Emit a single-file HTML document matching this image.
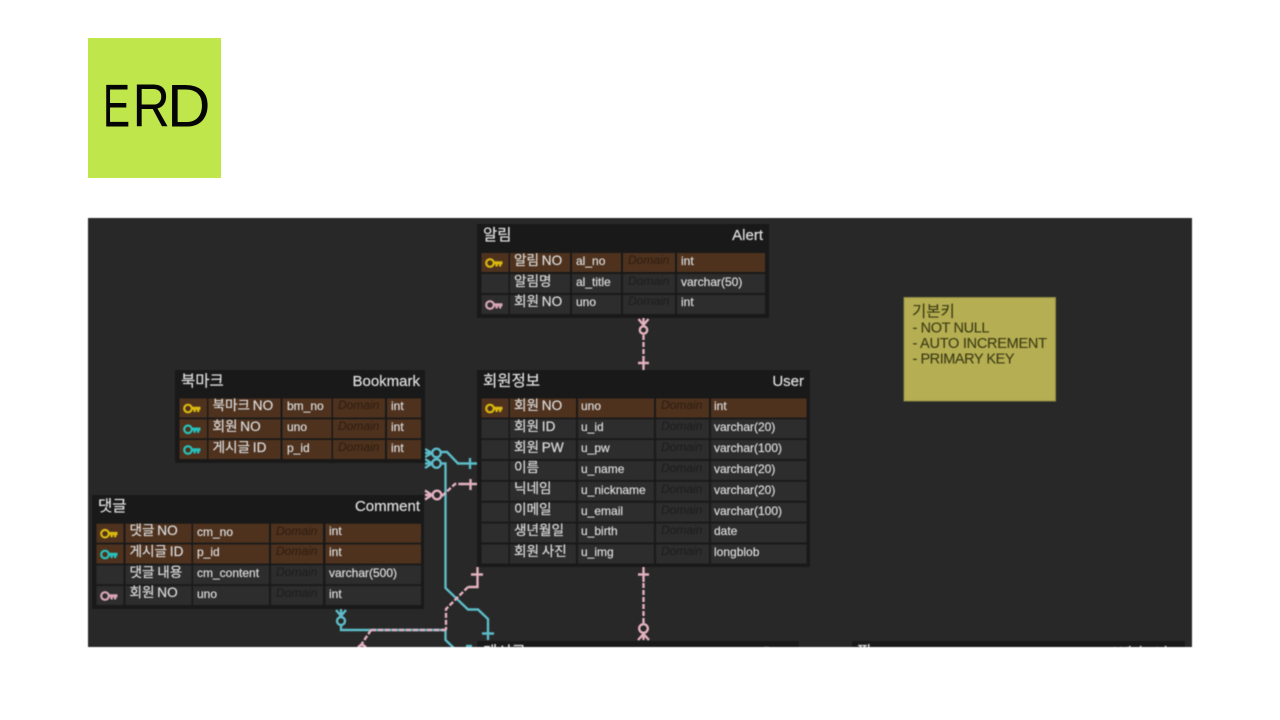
<!DOCTYPE html>
<html lang="ko">
<head>
<meta charset="utf-8">
<title>ERD</title>
<style>
html,body{margin:0;padding:0;background:#fff;width:1280px;height:720px;overflow:hidden}
svg{position:absolute;left:0;top:0}
#d{filter:blur(.5px)}
text{font-family:"Liberation Sans","Noto Sans CJK KR",sans-serif;fill:#dadada;stroke:#dadada;stroke-width:.22px;font-size:12px}
.h{font-size:15.500px;fill:#dedede}
.r{text-anchor:end;font-size:15px;fill:#dedede}
.n{font-size:13.600px;word-spacing:-1px}
.m{font-style:italic;fill:#1c1c1c;stroke:none;font-size:12px}
.mb{font-style:italic;fill:#2e1c0f;stroke:none;font-size:12px}
.a{fill:#4e321e}
.b{fill:#2d2d2d}
.o{fill:#191919}
.t{fill:none;stroke:#5cbcc8;stroke-width:2.400}
.p{fill:none;stroke:#e3b1bf;stroke-width:2.400}
.pd{fill:none;stroke:#e3b1bf;stroke-width:2.400;stroke-dasharray:5 2}
.c{fill:#282828;stroke-width:2.400}
.nt{fill:#3c3b15;stroke:#3c3b15;stroke-width:.1px;font-size:14.500px}
.e{font-size:60px;fill:#050505;stroke:none}
</style>
</head>
<body>
<svg width="1280" height="720" viewBox="0 0 1280 720">
<rect x="88" y="38" width="133" height="140" fill="#bfe74c"/>
<text class="e" transform="translate(102.900 126.700) scale(.68 1)">E</text>
<text class="e" transform="translate(132.600 126.700) scale(.86 1)">R</text>
<text class="e" transform="translate(167.100 126.700)">D</text>
</svg>
<svg id="d" width="1280" height="720" viewBox="0 0 1280 720">
<defs>
<clipPath id="cl"><rect x="88" y="218" width="1104" height="429"/></clipPath>
<g id="k"><circle cx="5" cy="5" r="3.800" fill="none" stroke="currentColor" stroke-width="2.200"/><path d="M8.500 3.200H17.500V6.400H16.300V8.500H14V6.400H12.800V8.500H10.500V6.400H8.500Z" fill="currentColor"/></g>
</defs>
<g clip-path="url(#cl)">
<rect x="88" y="218" width="1104" height="429" fill="#282828"/>

<!-- connectors -->
<path class="p" d="M643.500 326V334"/><path class="pd" d="M643.500 335V358"/><path class="p" d="M643.500 356V370M638 363H649"/>
<path class="p" d="M638.500 319L643.500 325L648.500 319M643.500 318V326"/><circle class="c" cx="643.500" cy="330" r="3.700" stroke="#e3b1bf"/>

<path class="t" d="M441 452H447L458 463.500H477M470 458V469"/>
<path class="t" d="M441 463.500H445.500V588L468 609.500H478L488 619V640M482 633.500H494"/>
<path class="t" d="M445.500 630V640L456 650M341 625V630H445.500"/>
<path class="t" d="M425 449L432 453L425 457M425 453H432M425 459L432 463.500L425 468M425 463.500H432"/>
<circle class="c" cx="436.500" cy="453" r="4.300" stroke="#5cbcc8"/><circle class="c" cx="436.500" cy="463.500" r="4.300" stroke="#5cbcc8"/>
<path class="t" d="M336 610L341 616L346 610M341 609V617"/><circle class="c" cx="341" cy="621" r="4" stroke="#5cbcc8"/>
<path class="t" d="M466 646H472"/>

<path class="pd" d="M442 496L455 484H463"/><path class="p" d="M462 484H477M470.500 479V490"/>
<path class="p" d="M425 490.500L432 495L425 499.500M425 495H432"/><circle class="c" cx="437" cy="495" r="4.300" stroke="#e3b1bf"/>
<path class="p" d="M477.500 567V587H468M471 574.500H483"/>
<path class="pd" d="M468 587L446 609V630"/>
<path class="pd" d="M371 630H446M371 630L361 645"/>
<circle class="c" cx="362" cy="649" r="4" stroke="#e3b1bf"/>
<path class="p" d="M643.500 567V582M638 574.500H649"/><path class="pd" d="M643.500 583V624"/>
<circle class="c" cx="643.500" cy="628.500" r="4.300" stroke="#e3b1bf"/>
<path class="p" d="M643.500 633V640M638 640L643.500 634L649 640"/>

<!-- Note -->
<rect x="904" y="297.500" width="151.500" height="103.500" fill="#b5ae52" stroke="#8f8a44"/>
<text class="nt" x="912" y="316.500" style="font-size:15.500px">기본키</text>
<text class="nt" x="912.500" y="332.500" textLength="77">- NOT NULL</text>
<text class="nt" x="912.500" y="348" textLength="134.500">- AUTO INCREMENT</text>
<text class="nt" x="912.500" y="363.500" textLength="102">- PRIMARY KEY</text>

<!-- Alert -->
<rect class="o" x="477" y="224" width="292" height="94"/>
<text class="h" x="483" y="240">알림</text><text class="r" x="763" y="240">Alert</text>
<rect class="a" x="481.500" y="253" width="27" height="19"/><rect class="a" x="510" y="253" width="60" height="19"/><rect class="a" x="572" y="253" width="49" height="19"/><rect class="a" x="623" y="253" width="52" height="19"/><rect class="a" x="677" y="253" width="88" height="19"/>
<rect class="b" x="481.500" y="274" width="27" height="19"/><rect class="b" x="510" y="274" width="60" height="19"/><rect class="b" x="572" y="274" width="49" height="19"/><rect class="b" x="623" y="274" width="52" height="19"/><rect class="b" x="677" y="274" width="88" height="19"/>
<rect class="b" x="481.500" y="295" width="27" height="19"/><rect class="b" x="510" y="295" width="60" height="19"/><rect class="b" x="572" y="295" width="49" height="19"/><rect class="b" x="623" y="295" width="52" height="19"/><rect class="b" x="677" y="295" width="88" height="19"/>
<use href="#k" x="485" y="258" color="#d9b80f"/><use href="#k" x="485" y="300" color="#d8a5b5"/>
<text class="n" x="514" y="265">알림 NO</text><text x="576" y="265">al_no</text><text class="mb" x="628" y="264">Domain</text><text x="681" y="265">int</text>
<text class="n" x="514" y="286">알림명</text><text x="576" y="286">al_title</text><text class="m" x="628" y="285">Domain</text><text x="681" y="286">varchar(50)</text>
<text class="n" x="514" y="306">회원 NO</text><text x="576" y="306">uno</text><text class="m" x="628" y="305">Domain</text><text x="681" y="306">int</text>

<!-- User -->
<rect class="o" x="477" y="370" width="333" height="197"/>
<text class="h" x="483" y="386">회원정보</text><text class="r" x="804" y="386">User</text>
<rect class="a" x="481.500" y="398.500" width="27" height="19"/><rect class="a" x="510" y="398.500" width="66" height="19"/><rect class="a" x="578" y="398.500" width="76" height="19"/><rect class="a" x="656" y="398.500" width="53" height="19"/><rect class="a" x="711" y="398.500" width="95.500" height="19"/>
<rect class="b" x="481.500" y="419.300" width="27" height="19"/><rect class="b" x="510" y="419.300" width="66" height="19"/><rect class="b" x="578" y="419.300" width="76" height="19"/><rect class="b" x="656" y="419.300" width="53" height="19"/><rect class="b" x="711" y="419.300" width="95.500" height="19"/>
<rect class="b" x="481.500" y="440" width="27" height="19"/><rect class="b" x="510" y="440" width="66" height="19"/><rect class="b" x="578" y="440" width="76" height="19"/><rect class="b" x="656" y="440" width="53" height="19"/><rect class="b" x="711" y="440" width="95.500" height="19"/>
<rect class="b" x="481.500" y="461" width="27" height="19"/><rect class="b" x="510" y="461" width="66" height="19"/><rect class="b" x="578" y="461" width="76" height="19"/><rect class="b" x="656" y="461" width="53" height="19"/><rect class="b" x="711" y="461" width="95.500" height="19"/>
<rect class="b" x="481.500" y="481.800" width="27" height="19"/><rect class="b" x="510" y="481.800" width="66" height="19"/><rect class="b" x="578" y="481.800" width="76" height="19"/><rect class="b" x="656" y="481.800" width="53" height="19"/><rect class="b" x="711" y="481.800" width="95.500" height="19"/>
<rect class="b" x="481.500" y="502.700" width="27" height="19"/><rect class="b" x="510" y="502.700" width="66" height="19"/><rect class="b" x="578" y="502.700" width="76" height="19"/><rect class="b" x="656" y="502.700" width="53" height="19"/><rect class="b" x="711" y="502.700" width="95.500" height="19"/>
<rect class="b" x="481.500" y="523.500" width="27" height="19"/><rect class="b" x="510" y="523.500" width="66" height="19"/><rect class="b" x="578" y="523.500" width="76" height="19"/><rect class="b" x="656" y="523.500" width="53" height="19"/><rect class="b" x="711" y="523.500" width="95.500" height="19"/>
<rect class="b" x="481.500" y="544.500" width="27" height="19"/><rect class="b" x="510" y="544.500" width="66" height="19"/><rect class="b" x="578" y="544.500" width="76" height="19"/><rect class="b" x="656" y="544.500" width="53" height="19"/><rect class="b" x="711" y="544.500" width="95.500" height="19"/>
<use href="#k" x="485" y="403.500" color="#d9b80f"/>
<text class="n" x="514" y="410">회원 NO</text><text x="581" y="410">uno</text><text class="mb" x="661" y="409">Domain</text><text x="714" y="410">int</text>
<text class="n" x="514" y="431">회원 ID</text><text x="581" y="431">u_id</text><text class="m" x="661" y="430">Domain</text><text x="714" y="431">varchar(20)</text>
<text class="n" x="514" y="452">회원 PW</text><text x="581" y="452">u_pw</text><text class="m" x="661" y="451">Domain</text><text x="714" y="452">varchar(100)</text>
<text class="n" x="514" y="472">이름</text><text x="581" y="473">u_name</text><text class="m" x="661" y="472">Domain</text><text x="714" y="473">varchar(20)</text>
<text class="n" x="514" y="493">닉네임</text><text x="581" y="494">u_nickname</text><text class="m" x="661" y="493">Domain</text><text x="714" y="494">varchar(20)</text>
<text class="n" x="514" y="514">이메일</text><text x="581" y="515">u_email</text><text class="m" x="661" y="514">Domain</text><text x="714" y="515">varchar(100)</text>
<text class="n" x="514" y="535">생년월일</text><text x="581" y="535">u_birth</text><text class="m" x="661" y="534">Domain</text><text x="714" y="535">date</text>
<text class="n" x="514" y="556">회원 사진</text><text x="581" y="556">u_img</text><text class="m" x="661" y="555">Domain</text><text x="714" y="556">longblob</text>

<!-- Bookmark -->
<rect class="o" x="175" y="370" width="250" height="93"/>
<text class="h" x="181" y="386">북마크</text><text class="r" x="420" y="386">Bookmark</text>
<rect class="a" x="179.500" y="398.500" width="27.500" height="19"/><rect class="a" x="208.500" y="398.500" width="72" height="19"/><rect class="a" x="282.500" y="398.500" width="49" height="19"/><rect class="a" x="333" y="398.500" width="52" height="19"/><rect class="a" x="387" y="398.500" width="34" height="19"/>
<rect class="a" x="179.500" y="419.300" width="27.500" height="19"/><rect class="a" x="208.500" y="419.300" width="72" height="19"/><rect class="a" x="282.500" y="419.300" width="49" height="19"/><rect class="a" x="333" y="419.300" width="52" height="19"/><rect class="a" x="387" y="419.300" width="34" height="19"/>
<rect class="a" x="179.500" y="440" width="27.500" height="19"/><rect class="a" x="208.500" y="440" width="72" height="19"/><rect class="a" x="282.500" y="440" width="49" height="19"/><rect class="a" x="333" y="440" width="52" height="19"/><rect class="a" x="387" y="440" width="34" height="19"/>
<use href="#k" x="183" y="403.500" color="#d9b80f"/><use href="#k" x="183" y="424.300" color="#27c0bb"/><use href="#k" x="183" y="445" color="#27c0bb"/>
<text class="n" x="212.500" y="410">북마크 NO</text><text x="287" y="410">bm_no</text><text class="mb" x="338" y="409">Domain</text><text x="391" y="410">int</text>
<text class="n" x="212.500" y="431">회원 NO</text><text x="287" y="431">uno</text><text class="mb" x="338" y="430">Domain</text><text x="391" y="431">int</text>
<text class="n" x="212.500" y="452">게시글 ID</text><text x="287" y="452">p_id</text><text class="mb" x="338" y="451">Domain</text><text x="391" y="452">int</text>

<!-- Comment -->
<rect class="o" x="92" y="495" width="332" height="114"/>
<text class="h" x="98" y="511">댓글</text><text class="r" x="420" y="511">Comment</text>
<rect class="a" x="96.500" y="523.700" width="27" height="19"/><rect class="a" x="125.500" y="523.700" width="66" height="19"/><rect class="a" x="193" y="523.700" width="76" height="19"/><rect class="a" x="271" y="523.700" width="52" height="19"/><rect class="a" x="325.500" y="523.700" width="95.500" height="19"/>
<rect class="a" x="96.500" y="544.500" width="27" height="19"/><rect class="a" x="125.500" y="544.500" width="66" height="19"/><rect class="a" x="193" y="544.500" width="76" height="19"/><rect class="a" x="271" y="544.500" width="52" height="19"/><rect class="a" x="325.500" y="544.500" width="95.500" height="19"/>
<rect class="b" x="96.500" y="565.300" width="27" height="19"/><rect class="b" x="125.500" y="565.300" width="66" height="19"/><rect class="b" x="193" y="565.300" width="76" height="19"/><rect class="b" x="271" y="565.300" width="52" height="19"/><rect class="b" x="325.500" y="565.300" width="95.500" height="19"/>
<rect class="b" x="96.500" y="586" width="27" height="19"/><rect class="b" x="125.500" y="586" width="66" height="19"/><rect class="b" x="193" y="586" width="76" height="19"/><rect class="b" x="271" y="586" width="52" height="19"/><rect class="b" x="325.500" y="586" width="95.500" height="19"/>
<use href="#k" x="100" y="528.700" color="#d9b80f"/><use href="#k" x="100" y="549.500" color="#27c0bb"/><use href="#k" x="100" y="591" color="#d8a5b5"/>
<text class="n" x="129.500" y="535">댓글 NO</text><text x="197" y="536">cm_no</text><text class="mb" x="276" y="535">Domain</text><text x="329" y="535">int</text>
<text class="n" x="129.500" y="556">게시글 ID</text><text x="197" y="556">p_id</text><text class="mb" x="276" y="555">Domain</text><text x="329" y="556">int</text>
<text class="n" x="129.500" y="577">댓글 내용</text><text x="197" y="577">cm_content</text><text class="m" x="276" y="576">Domain</text><text x="329" y="577">varchar(500)</text>
<text class="n" x="129.500" y="597">회원 NO</text><text x="197" y="598">uno</text><text class="m" x="276" y="597">Domain</text><text x="329" y="598">int</text>

<!-- Clipped tables -->
<rect class="o" x="477" y="641" width="322" height="20"/>
<text class="h" x="483" y="657">게시글</text><text class="r" x="793" y="657">Post</text>
<rect class="o" x="852" y="641" width="333" height="20"/>
<text class="h" x="857" y="657">찜</text><text class="r" x="1179" y="657">Wish_List</text>
</g>
</svg>
</body>
</html>
